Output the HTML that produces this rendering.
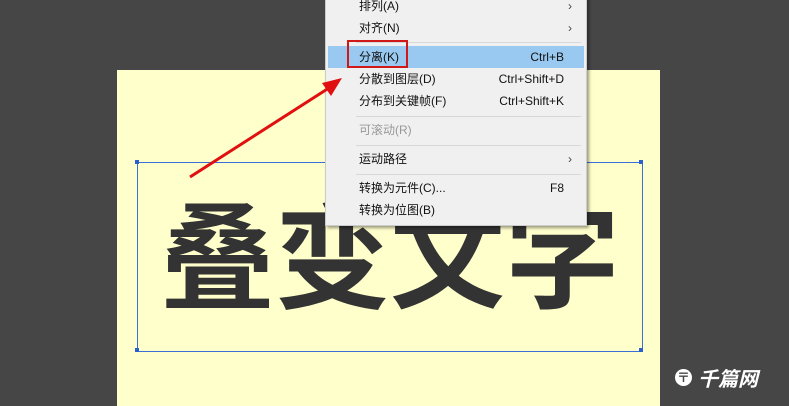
<!DOCTYPE html>
<html><head><meta charset="utf-8"><style>
body{margin:0;width:789px;height:406px;background:#464646;position:relative;overflow:hidden;font-family:"Liberation Sans","Noto Sans CJK SC",sans-serif}
.cv{position:absolute;left:117px;top:70px;width:543px;height:336px;background:#ffffcc}
.big{position:absolute;left:160px;top:193px;font-size:115px;font-weight:bold;color:#333;letter-spacing:0px;line-height:1;font-family:"Noto Sans CJK SC",sans-serif;white-space:nowrap}
.box{position:absolute;left:137px;top:162px;width:504px;height:188px;border:1px solid #3a6fd8}
.h{position:absolute;width:4px;height:4px;background:#2a5fd0}
.menu{position:absolute;left:325px;top:-4px;width:260px;height:228px;background:#f0f0f0;border:1px solid #ccc;box-shadow:2px 2px 3px rgba(0,0,0,.4)}
.it{position:absolute;left:0;width:256px;height:22px;font-size:12px;color:#111;line-height:22px}
.it span.t{position:absolute;left:33px}
.it span.k{position:absolute;right:18px}
.sep{position:absolute;left:30px;width:225px;height:1px;background:#d8d8d8}
.ar{position:absolute;right:10px;font-size:12px;color:#444}
</style></head><body>
<div class="cv"></div>
<div class="big">叠变文字</div>
<div class="box"></div>
<div class="h" style="left:135px;top:160px"></div><div class="h" style="left:639px;top:160px"></div>
<div class="h" style="left:135px;top:348px"></div><div class="h" style="left:639px;top:348px"></div>
<div class="menu">
<div class="it" style="top:-2px"><span class="t">排列(A)</span><span class="ar">›</span></div>
<div class="it" style="top:20px"><span class="t">对齐(N)</span><span class="ar">›</span></div>
<div class="sep" style="top:45px"></div>
<div class="it" style="top:49px;left:2px;background:#99c9f0"><span class="t" style="left:31px">分离(K)</span><span class="k" style="right:20px">Ctrl+B</span></div>
<div class="it" style="top:71px"><span class="t">分散到图层(D)</span><span class="k">Ctrl+Shift+D</span></div>
<div class="it" style="top:93px"><span class="t">分布到关键帧(F)</span><span class="k">Ctrl+Shift+K</span></div>
<div class="sep" style="top:119px"></div>
<div class="it" style="top:122px;color:#999"><span class="t">可滚动(R)</span></div>
<div class="sep" style="top:148px"></div>
<div class="it" style="top:151px"><span class="t">运动路径</span><span class="ar">›</span></div>
<div class="sep" style="top:177px"></div>
<div class="it" style="top:180px"><span class="t">转换为元件(C)...</span><span class="k">F8</span></div>
<div class="it" style="top:202px"><span class="t">转换为位图(B)</span></div>
</div>
<div style="position:absolute;left:347px;top:40px;width:57px;height:24px;border:2px solid #d01818"></div>
<svg style="position:absolute;left:0;top:0" width="789" height="406"><line x1="190" y1="177" x2="332" y2="86" stroke="#e01010" stroke-width="3"/><polygon points="342,78 322,83 331,96" fill="#e01010"/></svg>
<div style="position:absolute;left:675px;top:369px;width:17px;height:17px;border-radius:50%;background:#fff;color:#464646;font-size:13px;line-height:17px;text-align:center;font-weight:bold">〒</div>
<div style="position:absolute;left:698px;top:365px;font-size:20px;color:#fff;font-weight:bold;font-style:italic;font-family:'Noto Sans CJK SC',sans-serif;line-height:26px">千篇网</div>
</body></html>
